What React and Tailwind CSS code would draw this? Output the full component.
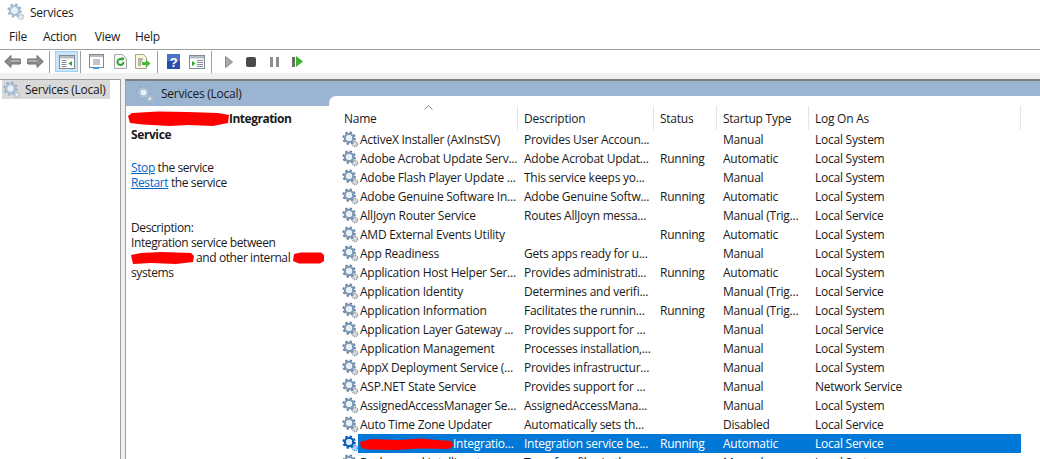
const font = { fontFamily: '"Open Sans", "Noto Sans", sans-serif' }

const rows = [
  ['ActiveX Installer (AxInstSV)', 'Provides User Accoun...', '', 'Manual', 'Local System'],
  ['Adobe Acrobat Update Serv...', 'Adobe Acrobat Updat...', 'Running', 'Automatic', 'Local System'],
  ['Adobe Flash Player Update ...', 'This service keeps yo...', '', 'Manual', 'Local System'],
  ['Adobe Genuine Software In...', 'Adobe Genuine Softw...', 'Running', 'Automatic', 'Local System'],
  ['AllJoyn Router Service', 'Routes AllJoyn messa...', '', 'Manual (Trig...', 'Local Service'],
  ['AMD External Events Utility', '', 'Running', 'Automatic', 'Local System'],
  ['App Readiness', 'Gets apps ready for u...', '', 'Manual', 'Local System'],
  ['Application Host Helper Ser...', 'Provides administrati...', 'Running', 'Automatic', 'Local System'],
  ['Application Identity', 'Determines and verifi...', '', 'Manual (Trig...', 'Local Service'],
  ['Application Information', 'Facilitates the runnin...', 'Running', 'Manual (Trig...', 'Local System'],
  ['Application Layer Gateway ...', 'Provides support for ...', '', 'Manual', 'Local Service'],
  ['Application Management', 'Processes installation,...', '', 'Manual', 'Local System'],
  ['AppX Deployment Service (...', 'Provides infrastructur...', '', 'Manual', 'Local System'],
  ['ASP.NET State Service', 'Provides support for ...', '', 'Manual', 'Network Service'],
  ['AssignedAccessManager Se...', 'AssignedAccessMana...', '', 'Manual', 'Local System'],
  ['Auto Time Zone Updater', 'Automatically sets th...', '', 'Disabled', 'Local Service'],
]

function Gear({ className = 'w-4 h-4', selected, pale }) {
  const main = selected ? '#0a5fb4' : pale ? '#a9bfd4' : '#7f9ab5'
  const teeth = selected ? '#0a5fb4' : pale ? '#94abc2' : '#64809b'
  const small = selected ? '#3d8fdc' : pale ? '#b3bec8' : '#8793a0'
  return (
    <svg viewBox="0 0 18 18" className={className}>
      <circle cx="7.5" cy="7.5" r="6" fill="none" stroke={teeth} strokeWidth="2.2" strokeDasharray="2.4 2.3" />
      <circle cx="7.5" cy="7.5" r="4.4" fill="none" stroke={main} strokeWidth="2.4" />
      <circle cx="7.5" cy="7.5" r="3" fill={selected ? '#d8ebfb' : '#e8f0f7'} />
      <circle cx="13.8" cy="13.8" r="2.7" fill="none" stroke={small} strokeWidth="1.5" strokeDasharray="1.3 0.8" />
      <circle cx="13.8" cy="13.8" r="1.5" fill={selected ? '#d8ebfb' : '#f4f6f8'} stroke={small} strokeWidth="0.5" />
    </svg>
  )
}

// red marker scribbles over the hidden names
function Redact({ w, h, d, className = '' }) {
  return (
    <svg viewBox={`0 0 ${w} ${h}`} width={w} height={h} className={`inline-block align-middle shrink-0 ${className}`}>
      <path d={d} fill="#fe0000" />
    </svg>
  )
}

function Sep() {
  return <div className="w-px h-[22px] bg-[#a0a0a0] shrink-0" />
}

function Arrow({ flip }) {
  return (
    <svg viewBox="0 0 17 13" className={`w-[17px] h-[13px] ${flip ? '-scale-x-100' : ''}`}>
      <path d="M7 0.5 0.7 6.5 7 12.5V9h9.3V4H7z" fill="#8d8d8d" stroke="#6f6f6f" />
      <path d="M7 5h8.5v1.5H6z" fill="#b8b8b8" />
    </svg>
  )
}

function PaneIcon({ arrowRight }) {
  return (
    <svg viewBox="0 0 16 14" className="w-4 h-[14px]">
      <rect x="0.5" y="0.5" width="15" height="13" fill="#fff" stroke="#7f8a94" />
      <rect x="1" y="1" width="14" height="2.5" fill="#b4bcc4" />
      {arrowRight ? <path d="M3 6v5l3.5-2.5z" fill="#2fa32f" /> : <path d="M13 6v5l-3.5-2.5z" fill="#2fa32f" />}
      <path d={arrowRight ? 'M8 5.5h6M8 7.5h6M8 9.5h6M8 11.5h6' : 'M2.5 5.5h5M2.5 7.5h5M2.5 9.5h5M2.5 11.5h5'} stroke="#7f8a94" strokeWidth="1" />
    </svg>
  )
}

function Toolbar() {
  return (
    <div className="flex items-center h-[23px] bg-white">
      <div className="flex items-center gap-[6px] pl-1 w-[49px]">
        <Arrow />
        <Arrow flip />
      </div>
      <Sep />
      <div className="ml-[5px] w-[23px] h-[21px] flex items-center justify-center bg-[#cce4f7] border border-[#99d1ff]">
        <PaneIcon />
      </div>
      <div className="ml-[2px]"><Sep /></div>
      <svg viewBox="0 0 15 15" className="ml-[8px] w-[15px] h-[15px]">
        <rect x="0.5" y="0.5" width="14" height="13" fill="#fff" stroke="#808890" />
        <rect x="1" y="1" width="13" height="2" fill="#b4bcc4" />
        <path d="M4 6h7M4 8h7M4 10h7" stroke="#7f8a94" />
        <rect x="4" y="13" width="6" height="2" fill="#32a0e6" />
      </svg>
      <svg viewBox="0 0 13 15" className="ml-[10px] w-[13px] h-[15px]">
        <path d="M0.5 0.5h8l4 4v10h-12z" fill="#f7f7f7" stroke="#a8a8a8" />
        <path d="M9.5 8a3 3 0 1 1-1-2.3" fill="none" stroke="#2fa32f" strokeWidth="2" />
        <path d="M7 3l3.5 1-1.5 3z" fill="#2fa32f" />
      </svg>
      <svg viewBox="0 0 16 15" className="ml-[8px] w-4 h-[15px]">
        <path d="M0.5 0.5h8l3 3v11h-11z" fill="#fdf6dc" stroke="#a8a090" />
        <path d="M3 5h5M3 7h4M3 9h3M3 11h3" stroke="#777" />
        <path d="M7 8h4V5.5L15.5 9.5 11 13.5V11H7z" fill="#49b83c" />
      </svg>
      <div className="ml-[6px]"><Sep /></div>
      <svg viewBox="0 0 13 15" className="ml-[9px] w-[13px] h-[15px]">
        <rect width="13" height="15" fill="#2a4fa8" />
        <rect width="13" height="7" fill="#4b74c9" />
        <text x="6.5" y="12.5" textAnchor="middle" fontSize="13" fontWeight="700" fill="#fff" fontFamily="Liberation Sans">?</text>
      </svg>
      <div className="ml-[9px]"><PaneIcon arrowRight /></div>
      <div className="ml-[6px]"><Sep /></div>
      <svg viewBox="0 0 8 12" className="ml-[13px] w-2 h-3"><path d="M0.5 0.5v11L7.5 6z" fill="#a8a8a8" stroke="#8a8a8a" /></svg>
      <div className="ml-[13px] w-[10px] h-[10px] rounded-[2px] bg-[#4a4a4a]" />
      <div className="ml-[14px] flex gap-[3px]">
        <div className="w-[3px] h-[10px] bg-[#8e8e8e]" />
        <div className="w-[3px] h-[10px] bg-[#8e8e8e]" />
      </div>
      <div className="ml-[13px] flex items-center gap-px">
        <div className="w-[3px] h-[10px] bg-[#6b6b6b]" />
        <svg viewBox="0 0 7 11" className="w-[7px] h-[11px]"><path d="M0 0v11L7 5.5z" fill="#3bb52f" /></svg>
      </div>
    </div>
  )
}

function Row({ r, selected }) {
  return (
    <div className="flex h-[19px] items-center">
      <div className="w-[20px] pl-[4px] shrink-0"><Gear selected={selected} className="w-[17px] h-[17px]" /></div>
      <div className={`flex h-[19px] items-center w-[663px] shrink-0 whitespace-nowrap ${selected ? 'bg-[#0078d7] text-white' : ''}`}>
        <div className="w-[160px] pl-[2px] shrink-0 flex items-center">
          {selected
            ? <><Redact w={94} h={12} className="-ml-px" d="M1 4 12 1 40 2 62 0.5 78 2 93 3 94 8 90 11 60 10.5 38 12 10 11.5 2 10z" />Integratio...</>
            : r[0]}
        </div>
        <div className="w-[136px] pl-[6px] shrink-0">{r[1]}</div>
        <div className="w-[63px] pl-[6px] shrink-0">{r[2]}</div>
        <div className="w-[92px] pl-[6px] shrink-0">{r[3]}</div>
        <div className="pl-[6px]">{r[4]}</div>
      </div>
    </div>
  )
}

export default function App() {
  const heads = [['Name', 'w-[180px] pl-[6px]'], ['Description', 'w-[136px] pl-[6px]'], ['Status', 'w-[63px] pl-[6px]'], ['Startup Type', 'w-[92px] pl-[6px]'], ['Log On As', 'w-[212px] pl-[6px]']]
  return (
    <div className="h-[459px] w-[1040px] overflow-hidden bg-white text-[12px] leading-[15px] text-[#1a1a1a] tracking-[-0.25px]" style={font}>
      <div className="h-[24px] flex items-center pl-[7px] gap-[5px]">
        <Gear pale className="w-[18px] h-[18px]" />
        <span>Services</span>
      </div>
      <div className="h-[26px] flex items-center border-b border-[#a0a0a0] pl-[9px] gap-[16px] pb-[1px]">
        <span>File</span><span className="mr-[2px]">Action</span><span className="-mr-px">View</span><span>Help</span>
      </div>
      <Toolbar />
      <div className="h-[6px] bg-[#f0f0f0]" />
      <div className="flex h-[380px] bg-[#f0f0f0]">
        <div className="w-[121px] shrink-0 bg-white border-r border-t border-[#a0a0a0] pl-[2px]">
          <div className="flex items-center h-[19px] w-[108px] bg-[#d9d9d9] pl-[1px] gap-[4px] whitespace-nowrap">
            <Gear pale className="w-[18px] h-[18px]" />
            <span>Services (Local)</span>
          </div>
        </div>
        <div className="w-[4px] shrink-0" />
        <div className="flex-1 bg-white border-l border-[#a0a0a0] border-t-2 border-t-[#808080] flex flex-col min-w-0">
          <div className="relative h-[25px] bg-[#9ab4d1] flex items-center gap-[7px] pl-[10px] shrink-0">
            <Gear className="w-[18px] h-[18px]" pale />
            <span>Services (Local)</span>
            <div className="absolute left-[203px] right-0 top-[15px] h-[10px] bg-white rounded-tl-[7px]" />
          </div>
          <div className="flex flex-1 min-h-0">
            <div className="w-[212px] shrink-0 pl-[5px] pr-2 pt-[5px] tracking-[-0.4px]">
              <div className="font-bold whitespace-nowrap flex items-center -ml-[3px] tracking-[-0.5px]">
                <Redact w={101} h={15} d="M0 5 4 2 30 0.5 60 1 90 2 101 4 100 12 85 15 60 14 42 15 15 13.5 2 12z" />Integration
              </div>
              <div className="font-bold mt-px">Service</div>
              <div className="mt-[18px]"><a className="text-[#0066cc] underline">Stop</a> the service</div>
              <div><a className="text-[#0066cc] underline">Restart</a> the service</div>
              <div className="mt-[30px]">Description:</div>
              <div>Integration service between</div>
              <div className="whitespace-nowrap flex items-center">
                <Redact w={63} h={12} className="mr-[2px]" d="M0 3 10 1 30 0 60 1 63 4 62 10 45 12 20 11 2 12z" />
                <span>and other internal</span>
                <Redact w={31} h={12} className="ml-[3px]" d="M1 2 8 0.5 28 0.5 31 3 31 9 27 11.5 6 11.5 0 9z" />
              </div>
              <div>systems</div>
            </div>
            <div className="flex-1 min-w-0">
              <div className="flex h-[24px] relative">
                {heads.map(([h, c]) => (
                  <div key={h} className={`${c} shrink-0 border-r border-[#e5e5e5] flex items-center`}>{h}</div>
                ))}
                <svg viewBox="0 0 9 5" className="absolute left-[86px] -top-[1px] w-[9px] h-[5px]"><path d="M0.5 4.5 4.5 0.5l4 4" fill="none" stroke="#888" /></svg>
              </div>
              {rows.map(r => <Row key={r[0]} r={r} />)}
              <Row selected r={['', 'Integration service be...', 'Running', 'Automatic', 'Local Service']} />
              <Row r={['Background Intelligent ...', 'Transfers files in the ...', '', 'Manual', 'Local System']} />
            </div>
          </div>
        </div>
      </div>
    </div>
  )
}
